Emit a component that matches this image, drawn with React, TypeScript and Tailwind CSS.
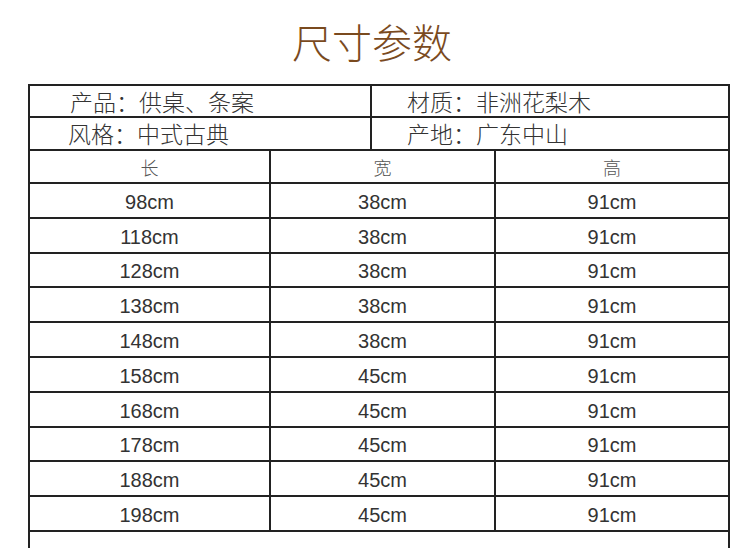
const rows: [string, string, string][] = [
  ["98cm", "38cm", "91cm"],
  ["118cm", "38cm", "91cm"],
  ["128cm", "38cm", "91cm"],
  ["138cm", "38cm", "91cm"],
  ["148cm", "38cm", "91cm"],
  ["158cm", "45cm", "91cm"],
  ["168cm", "45cm", "91cm"],
  ["178cm", "45cm", "91cm"],
  ["188cm", "45cm", "91cm"],
  ["198cm", "45cm", "91cm"],
];

const cjk = { fontFamily: '"Noto Sans CJK SC", "Noto Sans", sans-serif' };
const latin = { fontFamily: '"Liberation Sans", Arial, sans-serif' };

export default function App() {
  return (
    <div className="w-[750px] h-[548px] bg-white overflow-hidden" style={cjk}>
      {/* Title */}
      <div className="h-[84px] flex items-center justify-center pb-[3px] pr-[6px]">
        <h1 className="text-[40px] leading-none font-light text-[#7a4a1e]">尺寸参数</h1>
      </div>

      {/* Table */}
      <div className="ml-[28px] w-[702px] h-[464px] border-x-2 border-t-2 border-[#222]">
        {/* Info rows */}
        <div className="h-[32px] grid grid-cols-[342px_1fr] border-b-2 border-[#222] text-[23px] font-light text-[#333] leading-none">
          <div className="flex items-center pl-[40px] pt-[1px] border-r-2 border-[#222]">产品：供桌、条案</div>
          <div className="flex items-center pl-[35px] pt-[1px]">材质：非洲花梨木</div>
        </div>
        <div className="h-[33px] grid grid-cols-[342px_1fr] border-b-2 border-[#222] text-[23px] font-light text-[#333] leading-none">
          <div className="flex items-center pl-[38px] border-r-2 border-[#222]">风格：中式古典</div>
          <div className="flex items-center pl-[35px]">产地：广东中山</div>
        </div>

        {/* Header */}
        <div className="h-[33px] grid grid-cols-[241px_225px_1fr] border-b-2 border-[#222] text-[18px] font-light text-[#555] leading-none">
          <div className="flex items-center justify-center border-r-2 border-[#222]">长</div>
          <div className="flex items-center justify-center border-r-2 border-[#222]">宽</div>
          <div className="flex items-center justify-center">高</div>
        </div>

        {/* Data */}
        {rows.map((r, i) => (
          <div
            key={i}
            className="h-[34.8px] grid grid-cols-[241px_225px_1fr] border-b-2 border-[#222] text-[20px] text-[#333] leading-none"
            style={latin}
          >
            <div className="flex items-center justify-center pt-[3px] border-r-2 border-[#222]">{r[0]}</div>
            <div className="flex items-center justify-center pt-[3px] border-r-2 border-[#222]">{r[1]}</div>
            <div className="flex items-center justify-center pt-[3px]">{r[2]}</div>
          </div>
        ))}
      </div>
    </div>
  );
}
